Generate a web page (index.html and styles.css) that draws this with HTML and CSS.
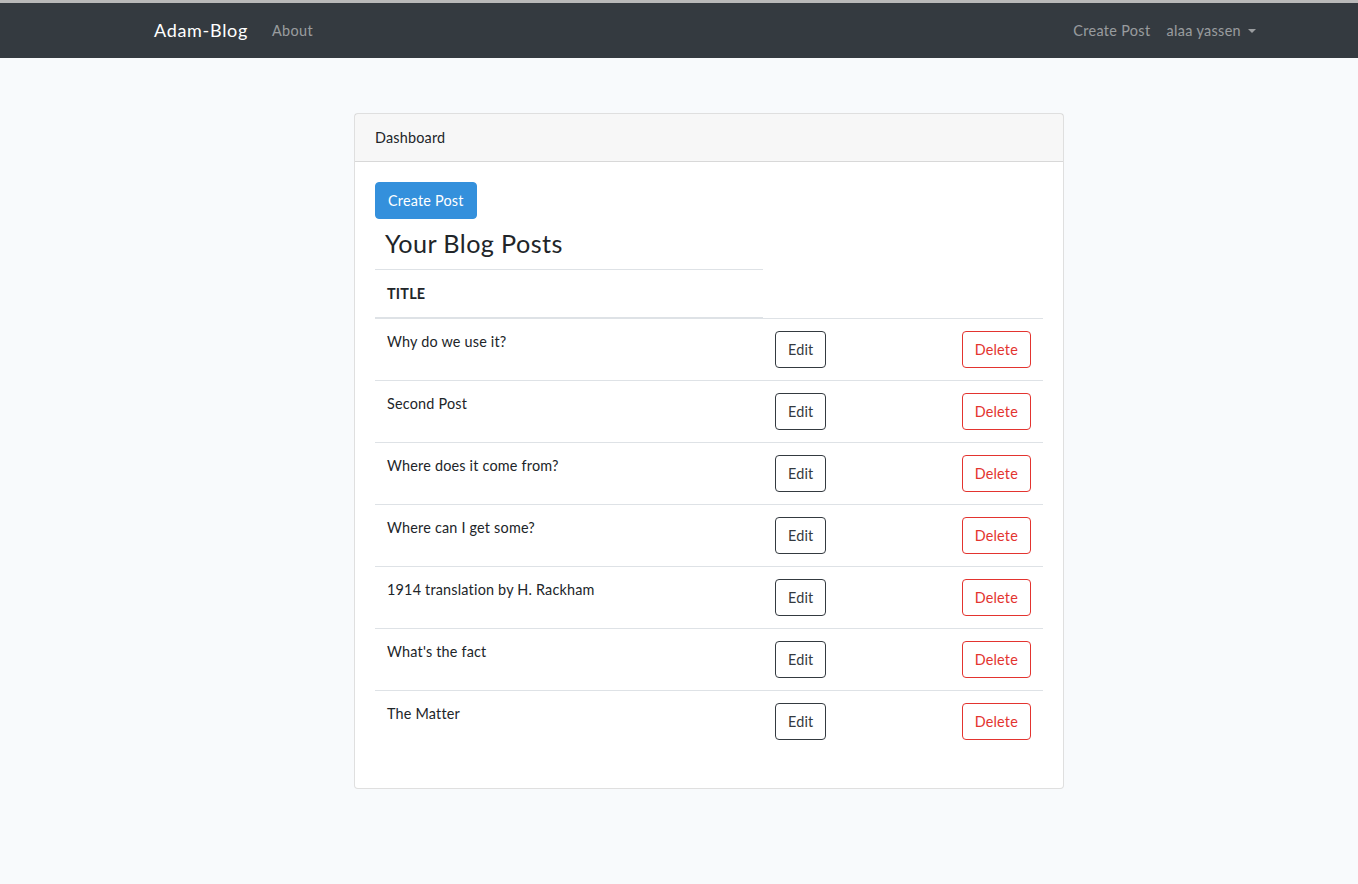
FILE: index.html
```html
<!DOCTYPE html>
<html lang="en">
<head>
<meta charset="utf-8">
<title>Adam-Blog</title>
<link rel="stylesheet" href="styles.css">
</head>
<body>
<div class="topstrip"></div>
<nav class="navbar">
  <div class="container nav-inner">
    <div class="nav-left">
      <a class="brand" href="#">Adam-Blog</a>
      <a class="nav-link" href="#">About</a>
    </div>
    <div class="nav-right">
      <a class="nav-link" href="#">Create Post</a>
      <a class="nav-link dropdown-toggle" href="#">alaa yassen</a>
    </div>
  </div>
</nav>
<main class="main">
  <div class="container">
    <div class="col">
      <div class="card">
        <div class="card-header">Dashboard</div>
        <div class="card-body">
          <a class="btn btn-primary" href="#">Create Post</a>
          <h3 class="title">Your Blog Posts</h3>
          <table class="table">
            <thead>
              <tr><th>TITLE</th></tr>
            </thead>
            <tbody>
              <tr><td class="c1">Why do we use it?</td><td class="c2"><a class="btn btn-dark" href="#">Edit</a></td><td class="c3"><a class="btn btn-danger" href="#">Delete</a></td></tr>
              <tr><td class="c1">Second Post</td><td class="c2"><a class="btn btn-dark" href="#">Edit</a></td><td class="c3"><a class="btn btn-danger" href="#">Delete</a></td></tr>
              <tr><td class="c1">Where does it come from?</td><td class="c2"><a class="btn btn-dark" href="#">Edit</a></td><td class="c3"><a class="btn btn-danger" href="#">Delete</a></td></tr>
              <tr><td class="c1">Where can I get some?</td><td class="c2"><a class="btn btn-dark" href="#">Edit</a></td><td class="c3"><a class="btn btn-danger" href="#">Delete</a></td></tr>
              <tr><td class="c1">1914 translation by H. Rackham</td><td class="c2"><a class="btn btn-dark" href="#">Edit</a></td><td class="c3"><a class="btn btn-danger" href="#">Delete</a></td></tr>
              <tr><td class="c1">What's the fact</td><td class="c2"><a class="btn btn-dark" href="#">Edit</a></td><td class="c3"><a class="btn btn-danger" href="#">Delete</a></td></tr>
              <tr><td class="c1">The Matter</td><td class="c2"><a class="btn btn-dark" href="#">Edit</a></td><td class="c3"><a class="btn btn-danger" href="#">Delete</a></td></tr>
            </tbody>
          </table>
        </div>
      </div>
    </div>
  </div>
</main>
</body>
</html>
```
FILE: styles.css
```css
* { box-sizing: border-box; }
html, body { margin: 0; padding: 0; }
body {
  background: #f8fafc;
  font-family: Lato, "Noto Sans", sans-serif;
  font-size: 14.4px;
  line-height: 1.6;
  letter-spacing: 0.2px;
  color: #212529;
}
a { text-decoration: none; }
.topstrip { height: 3px; background: #b9b9b9; }
.container {
  width: 1140px;
  margin-left: 139px;
  padding: 0 15px;
}
.navbar {
  background: #343a40;
  height: 55px;
}
.nav-inner {
  height: 55px;
  display: flex;
  align-items: center;
  justify-content: space-between;
}
.nav-left, .nav-right { display: flex; align-items: center; }
.brand {
  color: #fff;
  font-size: 18px;
  line-height: 28.8px;
  letter-spacing: 0.7px;
  margin-right: 16px;
}
.nav-link {
  color: rgba(255,255,255,0.5);
  padding: 8px 8px;
  font-size: 14.4px;
  letter-spacing: 0.35px;
}
.dropdown-toggle::after {
  content: "";
  display: inline-block;
  margin-left: 7px;
  vertical-align: 3px;
  border-top: 4.5px solid;
  border-left: 4.5px solid transparent;
  border-right: 4.5px solid transparent;
}
.main { padding-top: 55px; }
.col { width: 740px; padding: 0 15px; margin: 0 auto; }
.card {
  background: #fff;
  border: 1px solid rgba(0,0,0,0.125);
  border-radius: 4px;
}
.card-header {
  background: rgba(0,0,0,0.03);
  border-bottom: 1px solid rgba(0,0,0,0.125);
  padding: 12px 20px;
  line-height: 23px;
}
.card-body { padding: 20px; }
.btn {
  display: inline-block;
  padding: 6px 12px;
  border: 1px solid transparent;
  border-radius: 4px;
  line-height: 23.04px;
  font-size: 14.4px;
}
.btn-primary { background: #3490dc; color: #fff; border-color: #3490dc; }
.btn-dark { color: #343a40; border-color: #343a40; }
.btn-danger { color: #e3342f; border-color: #e3342f; }
.title {
  font-size: 25.2px;
  font-weight: 400;
  line-height: 1.2;
  letter-spacing: 0.4px;
  margin: 9px 0 11px 10px;
}
.table {
  width: 100%;
  table-layout: fixed;
  border-collapse: collapse;
  margin-bottom: 16px;
}
.table th {
  text-align: left;
  font-weight: 700;
  padding: 12px;
  border-top: 1px solid #dee2e6;
  border-bottom: 2px solid #dee2e6;
  width: 388px;
}
.table td {
  padding: 12px;
  border-top: 1px solid #dee2e6;
  vertical-align: top;
}
.table .c1 { padding-top: 11px; }
.table .c3 { text-align: right; }
```
